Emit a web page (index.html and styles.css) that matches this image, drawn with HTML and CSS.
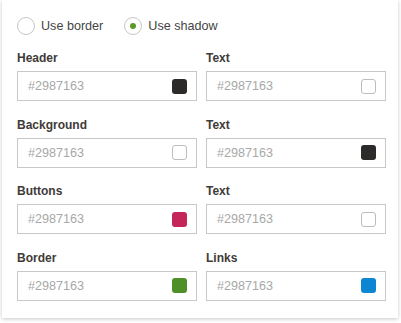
FILE: index.html
```html
<html>
<head>
<title>Colors</title>
<link rel="stylesheet" href="styles.css">
<meta http-equiv="Content-Type" content="text/html; charset=UTF-8">
</head>
<body>
<div class="card">
  <div class="radio-row">
    <label class="radio"><span class="radio-dot"></span>Use border</label>
    <label class="radio"><span class="radio-dot checked"></span>Use shadow</label>
  </div>
  <div class="color-grid">
    <div class="field">
      <div class="field-label">Header</div>
      <div class="color-input"><span class="color-value">#2987163</span><span class="swatch swatch-dark"></span></div>
    </div>
    <div class="field">
      <div class="field-label">Text</div>
      <div class="color-input"><span class="color-value">#2987163</span><span class="swatch swatch-white"></span></div>
    </div>
    <div class="field">
      <div class="field-label">Background</div>
      <div class="color-input"><span class="color-value">#2987163</span><span class="swatch swatch-white"></span></div>
    </div>
    <div class="field">
      <div class="field-label">Text</div>
      <div class="color-input"><span class="color-value">#2987163</span><span class="swatch swatch-dark"></span></div>
    </div>
    <div class="field">
      <div class="field-label">Buttons</div>
      <div class="color-input"><span class="color-value">#2987163</span><span class="swatch swatch-red"></span></div>
    </div>
    <div class="field">
      <div class="field-label">Text</div>
      <div class="color-input"><span class="color-value">#2987163</span><span class="swatch swatch-white"></span></div>
    </div>
    <div class="field">
      <div class="field-label">Border</div>
      <div class="color-input"><span class="color-value">#2987163</span><span class="swatch swatch-green"></span></div>
    </div>
    <div class="field">
      <div class="field-label">Links</div>
      <div class="color-input"><span class="color-value">#2987163</span><span class="swatch swatch-blue"></span></div>
    </div>
  </div>
</div>
</body>
</html>
```
FILE: styles.css
```css
body {
 margin: 0;
 background: #ffffff;
 font-family: "Liberation Sans", Arial, sans-serif;
 color: #3c3c3c;
}
.card {
 margin-left: 2px;
 width: 381px;
 height: 301px;
 padding: 17px 0 0 15px;
 background: #ffffff;
 box-shadow: 0 1px 4px rgba(0,0,0,0.22);
}
.radio-row {
 display: flex;
 align-items: center;
 height: 18px;
}
.radio {
 display: flex;
 align-items: center;
 font-size: 12.6px;
 color: #444444;
 margin-right: 21px;
}
.radio-dot {
 width: 16px;
 height: 16px;
 border: 1px solid #c6c6c6;
 border-radius: 50%;
 margin-right: 6px;
 display: flex;
 align-items: center;
 justify-content: center;
}
.radio-dot.checked:after {
 content: "";
 width: 6px;
 height: 6px;
 border-radius: 50%;
 background: #5b9a28;
}
.color-grid {
 display: grid;
 grid-template-columns: 180px 180px;
 column-gap: 9px;
 row-gap: 16.67px;
 margin-top: 16px;
}
.field-label {
 font-size: 12px;
 font-weight: bold;
 line-height: 14px;
 color: #3f3b38;
 margin-bottom: 6px;
}
.color-input {
 box-sizing: border-box;
 height: 30px;
 border: 1px solid #c8c8c8;
 display: flex;
 align-items: center;
 justify-content: space-between;
 padding: 0 9px 0 10px;
}
.color-value {
 font-size: 12.6px;
 color: #a8a8a8;
}
.swatch {
 box-sizing: border-box;
 width: 15px;
 height: 15px;
 border-radius: 3px;
}
.swatch-dark { background: #2d2b29; }
.swatch-white { border: 1px solid #bdbdbd; background: #ffffff; }
.swatch-red { background: #c4265a; }
.swatch-green { background: #4f8f28; }
.swatch-blue { background: #0c86d2; }
```
